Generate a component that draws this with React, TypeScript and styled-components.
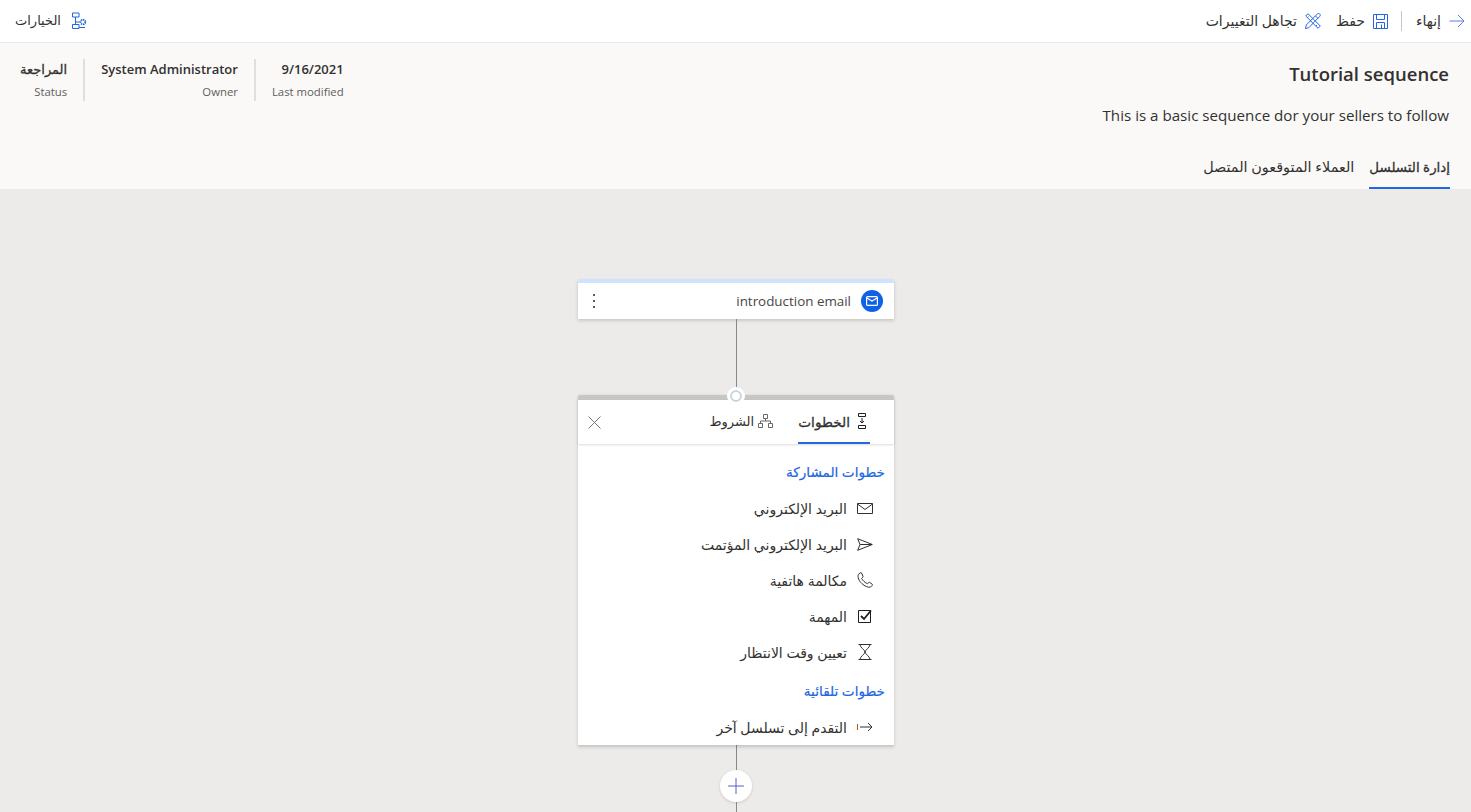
import React from 'react';
import styled, { createGlobalStyle } from 'styled-components';

const GlobalStyle = createGlobalStyle`
    html, body {
        margin: 0;
        height: 100%;
        overflow: hidden;
        background: #edebe9;
    }
    body {
        font-family: 'Open Sans', 'DejaVu Sans', sans-serif;
        color: #323130;
    }
`;

const BLUE = '#2266e3';

const ArrowIcon = () => (
    <svg width="16" height="16" viewBox="0 0 16 16" fill="none" stroke="#5b7de8" strokeWidth="1">
        <path d="M0.5 8H15M9 2l6 6-6 6" />
    </svg>
);

const SaveIcon = () => (
    <svg width="15" height="15" viewBox="0 0 15 15" fill="none" stroke={BLUE} strokeWidth="1">
        <path d="M.5.5h14v14H.5zM3.500.5v5h8v-5M3.500 14.500v-6h8v6M8.500 10.500v4" />
    </svg>
);

const DiscardIcon = () => (
    <svg width="16" height="16" viewBox="0 0 16 16" fill="none" stroke={BLUE} strokeWidth="1">
        <path d="M.5 15.500l.8-3.500L12.500.8c.7-.6 1.500-.5 2.200.2s.8 1.500.2 2.200L3.800 14.700zM10.500 3l2.500 2.500" />
        <path d="M.7 3L3 .7l12.300 12.300-2.300 2.300zM3.500 3.500l-1 1M6.500 6.500l-1 1M12 12l-1 1" />
    </svg>
);

const OptionsIcon = () => (
    <svg width="15" height="18" viewBox="0 0 15 18" fill="none" stroke={BLUE} strokeWidth="1">
        <path d="M.5 1h6.500v4H.5zM3.500 5v7.500M.5 12.500H7v4H.5z" />
        <circle cx="11" cy="10" r="2.400" strokeWidth="1.600" strokeDasharray="1.400 .6" />
        <path d="M3.500 10H8M7 15.500h6" />
    </svg>
);

const MailBadgeIcon = () => (
    <svg width="12" height="10" viewBox="0 0 12 10" fill="none" stroke="#fff" strokeWidth="1.200">
        <rect x="0.6" y="0.6" width="10.800" height="8.800" rx="1" />
        <path d="M0.8 2l5.200 3 5.200-3" />
    </svg>
);

const StepsIcon = () => (
    <svg width="8" height="16" viewBox="0 0 8 16" fill="none" stroke="#201f1e" strokeWidth="1">
        <path d="M.5.5h7v3h-7zM.5 12.500h7v3h-7zM4 5v5M2 8l2 2 2-2" />
    </svg>
);

const ConditionsIcon = () => (
    <svg width="15" height="14" viewBox="0 0 15 14" fill="none" stroke="#6b6967" strokeWidth="1">
        <path d="M5.500.5h4v4h-4zM.5 9.500h4v4h-4zM10.500 9.500h4v4h-4zM7.500 4.500V7M2.500 9.500V7h10v2.500" />
    </svg>
);

const CloseIcon = () => (
    <svg width="13" height="13" viewBox="0 0 13 13" fill="none" stroke="#797775" strokeWidth="1">
        <path d="M.5.5l12 12M12.500.5l-12 12" />
    </svg>
);

const MailIcon = () => (
    <svg width="16" height="11" viewBox="0 0 16 11" fill="none" stroke="#323130" strokeWidth="1">
        <path d="M.5.5h15v10H.5zM.5 1l7.500 5.500L15.500 1" />
    </svg>
);

const SendIcon = () => (
    <svg width="16" height="13" viewBox="0 0 16 13" fill="none" stroke="#323130" strokeWidth="1">
        <path d="M.7.7L15.300 6.500.7 12.300 3 6.500zM3 6.500h12" />
    </svg>
);

const PhoneIcon = () => (
    <svg width="16" height="16" viewBox="0 0 16 16" fill="none" stroke="#323130" strokeWidth="1">
        <path d="M3.500.7L1.300 2.500C.4 5 2 9 4.800 11.500c2.800 2.700 6.500 4.300 8.700 3.600l1.800-1.800c.3-.4.200-.8 0-1l-2.400-1.800c-.4-.3-.8-.3-1.100 0l-1.300 1.100C8 10.900 5.600 8.300 4.600 6.500l1.200-1.300c.3-.3.300-.7.100-1.100L4.500.9C4.200.5 3.800.5 3.500.7z" />
    </svg>
);

const TaskIcon = () => (
    <svg width="14" height="14" viewBox="0 0 14 14" fill="none" stroke="#201f1e">
        <path d="M.5 1.500h12v12H.5z" strokeWidth="1" />
        <path d="M3 7l3 3 7-8.500" strokeWidth="1.800" />
    </svg>
);

const WaitIcon = () => (
    <svg width="14" height="16" viewBox="0 0 14 16" fill="none" stroke="#323130" strokeWidth="1">
        <path d="M.5.500h13M.5 15.500h13M2 .5c0 3 5 5.500 5 7.500s-5 4.500-5 7.500M12 .5c0 3-5 5.500-5 7.500s5 4.500 5 7.500" />
    </svg>
);

const AdvanceIcon = () => (
    <svg width="16" height="10" viewBox="0 0 16 10" fill="none" strokeWidth="1">
        <path d="M.5 2v6" stroke="#ca5010" />
        <path d="M3 5h12M11 1l4 4-4 4" stroke="#323130" />
    </svg>
);

const PlusIcon = () => (
    <svg width="16" height="16" viewBox="0 0 16 16" fill="none" stroke="#5b5fc7" strokeWidth="1">
        <path d="M8 0v16M0 8h16" />
    </svg>
);

const engagementSteps = [
    { label: 'البريد الإلكتروني', icon: <MailIcon /> },
    { label: 'البريد الإلكتروني المؤتمت', icon: <SendIcon /> },
    { label: 'مكالمة هاتفية', icon: <PhoneIcon /> },
    { label: 'المهمة', icon: <TaskIcon /> },
    { label: 'تعيين وقت الانتظار', icon: <WaitIcon /> },
];

const metaItems = [
    { value: '9/16/2021', label: 'Last modified', arabic: false },
    { value: 'System Administrator', label: 'Owner', arabic: false },
    { value: 'المراجعة', label: 'Status', arabic: true },
];

const App: React.FC = () => (
    <Page dir="rtl">
        <GlobalStyle />
        <CommandBar>
            <CommandGroup>
                <Command>
                    <ArrowIcon />
                    <CommandLabel>إنهاء</CommandLabel>
                </Command>
                <CommandDivider />
                <Command>
                    <SaveIcon />
                    <CommandLabel>حفظ</CommandLabel>
                </Command>
                <Command $spaced>
                    <DiscardIcon />
                    <CommandLabel>تجاهل التغييرات</CommandLabel>
                </Command>
            </CommandGroup>
            <OptionsCommand>
                <OptionsIcon />
                <CommandLabel>الخيارات</CommandLabel>
            </OptionsCommand>
        </CommandBar>
        <Header>
            <HeaderTop>
                <div>
                    <Title>Tutorial sequence</Title>
                    <Description>This is a basic sequence dor your sellers to follow</Description>
                </div>
                <Meta>
                    {metaItems.map((item) => (
                        <MetaItem key={item.label}>
                            <MetaValue $arabic={item.arabic}>{item.value}</MetaValue>
                            <MetaLabel>{item.label}</MetaLabel>
                        </MetaItem>
                    ))}
                </Meta>
            </HeaderTop>
            <Tabs>
                <Tab $active>إدارة التسلسل</Tab>
                <Tab>العملاء المتوقعون المتصل</Tab>
            </Tabs>
        </Header>
        <Canvas>
            <EmailCard>
                <EmailBadge>
                    <MailBadgeIcon />
                </EmailBadge>
                <EmailName dir="ltr">introduction email</EmailName>
                <MoreButton>
                    <i />
                    <i />
                    <i />
                </MoreButton>
            </EmailCard>
            <Connector $height={76} />
            <Panel>
                <Ring />
                <PanelTabs>
                    <PanelTab $active>
                        <StepsIcon />
                        الخطوات
                    </PanelTab>
                    <PanelTab>
                        <ConditionsIcon />
                        الشروط
                    </PanelTab>
                    <CloseButton>
                        <CloseIcon />
                    </CloseButton>
                </PanelTabs>
                <SectionTitle>خطوات المشاركة</SectionTitle>
                {engagementSteps.map((step) => (
                    <StepRow key={step.label}>
                        <StepIcon>{step.icon}</StepIcon>
                        {step.label}
                    </StepRow>
                ))}
                <SectionTitle $spaced>خطوات تلقائية</SectionTitle>
                <StepRow>
                    <StepIcon>
                        <AdvanceIcon />
                    </StepIcon>
                    التقدم إلى تسلسل آخر
                </StepRow>
            </Panel>
            <Connector $height={25} />
            <AddButton>
                <PlusIcon />
            </AddButton>
            <Connector $height={20} />
        </Canvas>
    </Page>
);

const Page = styled.div`
    width: 100%;
    height: 812px;
    overflow: hidden;
    display: flex;
    flex-direction: column;
`;

const CommandBar = styled.div`
    height: 42px;
    flex: none;
    background: #fff;
    border-bottom: 1px solid #edebe9;
    display: flex;
    align-items: center;
    justify-content: space-between;
    padding: 0 6px 0 15px;
`;

const CommandGroup = styled.div`
    display: flex;
    align-items: center;
    gap: 14px;
`;

const Command = styled.div<{ $spaced?: boolean }>`
    display: flex;
    align-items: center;
    gap: 8px;
    font-size: 14px;
    color: #323130;
    white-space: nowrap;
    margin-right: ${(props) => (props.$spaced ? '1px' : '0')};
`;

const CommandLabel = styled.span`
    margin-top: -2px;
`;

const OptionsCommand = styled(Command)`
    font-size: 13px;
    gap: 11px;
`;

const CommandDivider = styled.div`
    width: 1px;
    height: 20px;
    background: #c8c6c4;
    margin-left: -1px;
`;

const Header = styled.div`
    height: 146px;
    flex: none;
    background: #faf9f8;
    display: flex;
    flex-direction: column;
    justify-content: space-between;
    padding: 0 21px;
`;

const HeaderTop = styled.div`
    display: flex;
    justify-content: space-between;
    padding-top: 16px;
`;

const Title = styled.div`
    direction: ltr;
    text-align: right;
    font-size: 18.500px;
    font-weight: 600;
    line-height: 30px;
    color: #323130;
    margin-right: 1px;
`;

const Description = styled.div`
    direction: ltr;
    text-align: right;
    font-size: 15.150px;
    line-height: 20px;
    margin-top: 16px;
    margin-right: 1px;
    color: #323130;
`;

const Meta = styled.div`
    display: flex;
    margin-left: -1px;
`;

const MetaItem = styled.div`
    display: flex;
    flex-direction: column;
    align-items: flex-start;
    gap: 6px;
    height: 42px;
    padding: 0 16px;
    border-right: 2px solid #e1dfdd;

    &:first-child {
        border-right: none;
    }

    &:last-child {
        padding-left: 0;
    }
`;

const MetaValue = styled.div<{ $arabic?: boolean }>`
    font-size: 13px;
    font-weight: ${(props) => (props.$arabic ? 400 : 600)};
    -webkit-text-stroke: ${(props) => (props.$arabic ? '0.3px' : '0')};
    line-height: 20px;
    color: #323130;
    white-space: nowrap;
`;

const MetaLabel = styled.div`
    font-size: 11.350px;
    line-height: 14px;
    color: #605e5c;
    white-space: nowrap;
`;

const Tabs = styled.div`
    display: flex;
    gap: 15px;
`;

const Tab = styled.div<{ $active?: boolean }>`
    height: 43px;
    box-sizing: border-box;
    padding-bottom: 2px;
    display: flex;
    align-items: center;
    font-size: ${(props) => (props.$active ? '13.400px' : '14.400px')};
    -webkit-text-stroke: ${(props) => (props.$active ? '0.3px' : '0')};
    color: #323130;
    box-shadow: ${(props) => (props.$active ? `inset 0 -2px 0 ${BLUE}` : 'none')};
`;

const Canvas = styled.div`
    flex: 1;
    min-height: 0;
    overflow: hidden;
    background: #edebe9;
    display: flex;
    flex-direction: column;
    align-items: center;
    padding-top: 90px;
    padding-left: 1px;
`;

const EmailCard = styled.div`
    width: 316px;
    height: 40px;
    flex: none;
    box-sizing: border-box;
    background: #fff;
    border-top: 4px solid #cfe2ff;
    box-shadow: 0 1.600px 3.600px rgba(0, 0, 0, 0.18);
    display: flex;
    align-items: center;
    padding: 0 11px 0 10px;
`;

const EmailBadge = styled.div`
    width: 22px;
    height: 22px;
    border-radius: 50%;
    background: #0f62e6;
    display: flex;
    align-items: center;
    justify-content: center;
`;

const EmailName = styled.div`
    font-size: 13.400px;
    color: #484644;
    margin-right: 10px;
`;

const MoreButton = styled.div`
    margin-right: auto;
    width: 12px;
    display: flex;
    flex-direction: column;
    align-items: center;
    gap: 4px;

    i {
        width: 2px;
        height: 2px;
        background: #605e5c;
    }
`;

const Connector = styled.div<{ $height: number }>`
    width: 1px;
    height: ${(props) => props.$height}px;
    flex: none;
    background: #8a8886;
`;

const Panel = styled.div`
    position: relative;
    width: 316px;
    height: 350px;
    flex: none;
    box-sizing: border-box;
    background: #fff;
    border-top: 5px solid #c8c6c4;
    border-radius: 2px 2px 0 0;
    box-shadow: 0 1.600px 3.600px rgba(0, 0, 0, 0.18);
`;

const Ring = styled.div`
    position: absolute;
    top: -13px;
    left: 149px;
    width: 18px;
    height: 18px;
    box-sizing: border-box;
    border-radius: 50%;
    background: #fff;
    border: 3px solid #fff;
    box-shadow: inset 0 0 0 2px #c7d3dc;
`;

const PanelTabs = styled.div`
    height: 44px;
    display: flex;
    align-items: stretch;
    gap: 25px;
    padding: 0 24px 0 10px;
    margin-bottom: 10px;
    box-shadow: 0 1px 2px rgba(0, 0, 0, 0.14);
`;

const PanelTab = styled.div<{ $active?: boolean }>`
    display: flex;
    align-items: center;
    box-sizing: border-box;
    gap: ${(props) => (props.$active ? '8px' : '4px')};
    padding: ${(props) => (props.$active ? '0 4px 2px 0' : '0 0 2px 0')};
    font-size: ${(props) => (props.$active ? '13.700px' : '13px')};
    -webkit-text-stroke: ${(props) => (props.$active ? '0.3px' : '0')};
    color: #323130;
    box-shadow: ${(props) => (props.$active ? `inset 0 -2px 0 ${BLUE}` : 'none')};
`;

const CloseButton = styled.div`
    margin-right: auto;
    display: flex;
    align-items: center;
`;

const SectionTitle = styled.div<{ $spaced?: boolean }>`
    font-size: 13.600px;
    -webkit-text-stroke: 0.2px;
    line-height: 36px;
    height: 36px;
    padding: 0 9px;
    margin-top: ${(props) => (props.$spaced ? '3px' : '0')};
    color: ${BLUE};
`;

const StepRow = styled.div`
    height: 36px;
    display: flex;
    align-items: center;
    gap: 10px;
    padding: 0 21px;
    font-size: 14px;
    color: #323130;
`;

const StepIcon = styled.span`
    width: 16px;
    display: flex;
    align-items: center;
    justify-content: center;
`;

const AddButton = styled.div`
    width: 32px;
    height: 32px;
    flex: none;
    border-radius: 50%;
    background: #fff;
    box-shadow: 0 1px 3px rgba(0, 0, 0, 0.14);
    display: flex;
    align-items: center;
    justify-content: center;
`;

export default App;
